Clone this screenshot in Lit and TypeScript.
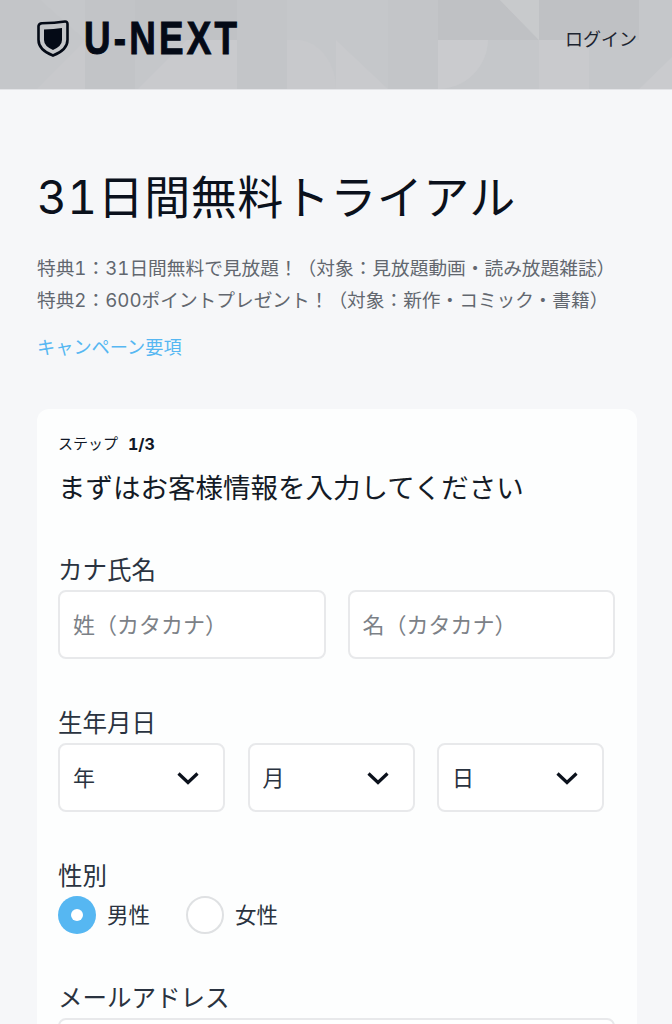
import { LitElement, html, css, svg } from "lit";
import { customElement } from "lit/decorators.js";

const chevron = html`<svg class="chev" viewBox="0 0 24 16" width="24" height="16"><path d="M2.5 3.5 L12 12.5 L21.5 3.5" fill="none" stroke="#0b111c" stroke-width="3.2"/></svg>`;

@customElement("app-root")
export class AppRoot extends LitElement {
  static styles = css`
    :host { display: block; height: 1024px; overflow: hidden; background: #f6f7f9; color: #1f2937;
      font-family: Inter, "Noto Sans CJK JP", sans-serif; font-variant-numeric: tabular-nums; }
    .hdr { position: relative; height: 90px; box-sizing: border-box; background: #c5c7ca; display: flex; align-items: center; justify-content: space-between; padding: 0 35px 0 37px; border-bottom: 1px solid #e3e4e7; overflow: hidden; }
    .pat { position: absolute; inset: 0; }
    .brand { position: relative; display: flex; align-items: center; gap: 15px; margin-top: -13px; }
    .logo { display: inline-block; transform: scaleX(0.8); transform-origin: left center; font-family: "Liberation Sans", sans-serif; font-weight: 700; font-size: 46px; line-height: 40px; color: #040a16; letter-spacing: 4px; -webkit-text-stroke: 1px #040a16; }
    .login { position: relative; font-size: 18px; color: #1c2430; margin-top: -13px; }
    main { padding: 0 35px 0 37px; }
    h1 { margin: 0; padding-top: 73px; font-weight: 400; font-size: 46px; line-height: 68px; color: #0b111c; letter-spacing: 0.5px; }
    .perk { margin: 0; font-size: 18.7px; line-height: 32px; color: #62676f; white-space: nowrap; }
    .perks { margin-top: 22px; }
    .link { display: block; margin-top: 16px; font-size: 18.2px; line-height: 28px; color: #56b7f2; }
    .card { margin-top: 48px; background: #fdfefe; border-radius: 12px; padding: 23px 22px 0 21px; height: 700px; }
    .step { font-size: 15px; line-height: 24px; color: #111827; display: flex; gap: 10px; }
    .step b { font-weight: 700; font-size: 16px; }
    h2 { margin: 12px 0 0; font-weight: 400; font-size: 27.5px; line-height: 40px; color: #141b26; }
    .label { font-size: 24.5px; line-height: 35px; padding-bottom: 2px; color: #2a3340; }
    .f1 { margin-top: 45px; }
    .row { display: flex; gap: 22px; }
    .row.sels { gap: 22.5px; }
    .input { flex: 1; height: 69px; box-sizing: border-box; border: 2px solid #e8e9eb; border-radius: 8px; display: flex; align-items: center; justify-content: space-between; padding: 0 23px 4px 13px; font-size: 22px; color: #7c8187; background: #fff; }
    .chev { margin-top: 4px; }
    .sel { flex: none; width: 167px; color: #2a3340; }
    .f2, .f3, .f4 { margin-top: 47px; }
    .radios { display: flex; align-items: center; height: 38px; }
    .r { width: 38px; height: 38px; border-radius: 50%; box-sizing: border-box; }
    .on { background: #56b7f2; display: flex; align-items: center; justify-content: center; }
    .on i { width: 12px; height: 12px; border-radius: 50%; background: #fff; display: block; }
    .off { border: 2px solid #dfe1e3; margin-left: 36px; background: #fff; }
    .rl { margin-left: 11px; padding-bottom: 4px; font-size: 21.5px; color: #2a3340; }
  `;
  render() {
    return html`
      <header class="hdr">
        <svg class="pat" viewBox="0 0 672 89" preserveAspectRatio="none">
          ${svg`<path d="M40 0 L85 40 H0 V0Z" fill="#c3c5c8"/><path d="M85 0H135V89H85Z" fill="#c2c4c7"/>
          <path d="M37 89 L85 40 V89Z" fill="#c8c9cc"/>
          <path d="M135 0H237V40H135Z" fill="#c0c2c5"/><path d="M138 89 L187 40 H237 V89Z" fill="#c9cacd"/>
          <path d="M237 0H287V89H237Z" fill="#c3c5c8"/><path d="M287 40 H300 A40 49 0 0 1 336 89 H287Z" fill="#c8c9cc"/>
          <path d="M336 40 L388 89 H336Z" fill="#c9cacd"/><path d="M388 0H438V89H388Z" fill="#c3c5c8"/>
          <path d="M438 0H500L539 40H438Z" fill="#bfc1c4"/><path d="M438 40 H488 A50 50 0 0 1 438 89Z" fill="#cacbce"/>
          <path d="M500 0H539V40Z" fill="#c8cacc"/>
          <path d="M539 0H639V40H539Z" fill="#bfc1c4"/><path d="M539 40H589V89H539Z" fill="#c9cacd"/><path d="M639 89L672 57V89Z" fill="#cacbce"/>`}
        </svg>
        <div class="brand">
          <svg width="32" height="37" viewBox="0 0 32 37">
            <path d="M1.5 6 Q2 3.5 5 3.3 Q18 3 28 1.5 Q30.5 1.4 30.5 4 V20 Q30.5 30 16 35.5 Q1.5 30 1.5 20Z" fill="none" stroke="#040a16" stroke-width="2.6"/>
            <path d="M7 9.5 Q17 9 25 8 V20 Q25 26 16 30 Q7 26 7 20Z" fill="#040a16"/>
          </svg>
          <span class="logo">U-NEXT</span>
        </div>
        <span class="login">ログイン</span>
      </header>
      <main>
        <h1>31日間無料トライアル</h1>
        <div class="perks">
          <p class="perk">特典1：31日間無料で見放題！（対象：見放題動画・読み放題雑誌）</p>
          <p class="perk">特典2：600ポイントプレゼント！（対象：新作・コミック・書籍）</p>
        </div>
        <a class="link">キャンペーン要項</a>
        <section class="card">
          <div class="step"><span>ステップ</span><b>1/3</b></div>
          <h2>まずはお客様情報を入力してください</h2>
          <div class="label f1">カナ氏名</div>
          <div class="row"><div class="input">姓（カタカナ）</div><div class="input">名（カタカナ）</div></div>
          <div class="label f2">生年月日</div>
          <div class="row sels">
            <div class="input sel">年${chevron}</div><div class="input sel">月${chevron}</div><div class="input sel">日${chevron}</div>
          </div>
          <div class="label f3">性別</div>
          <div class="radios">
            <span class="r on"><i></i></span><span class="rl">男性</span>
            <span class="r off"></span><span class="rl">女性</span>
          </div>
          <div class="label f4">メールアドレス</div>
          <div class="input"></div>
        </section>
      </main>
    `;
  }
}
